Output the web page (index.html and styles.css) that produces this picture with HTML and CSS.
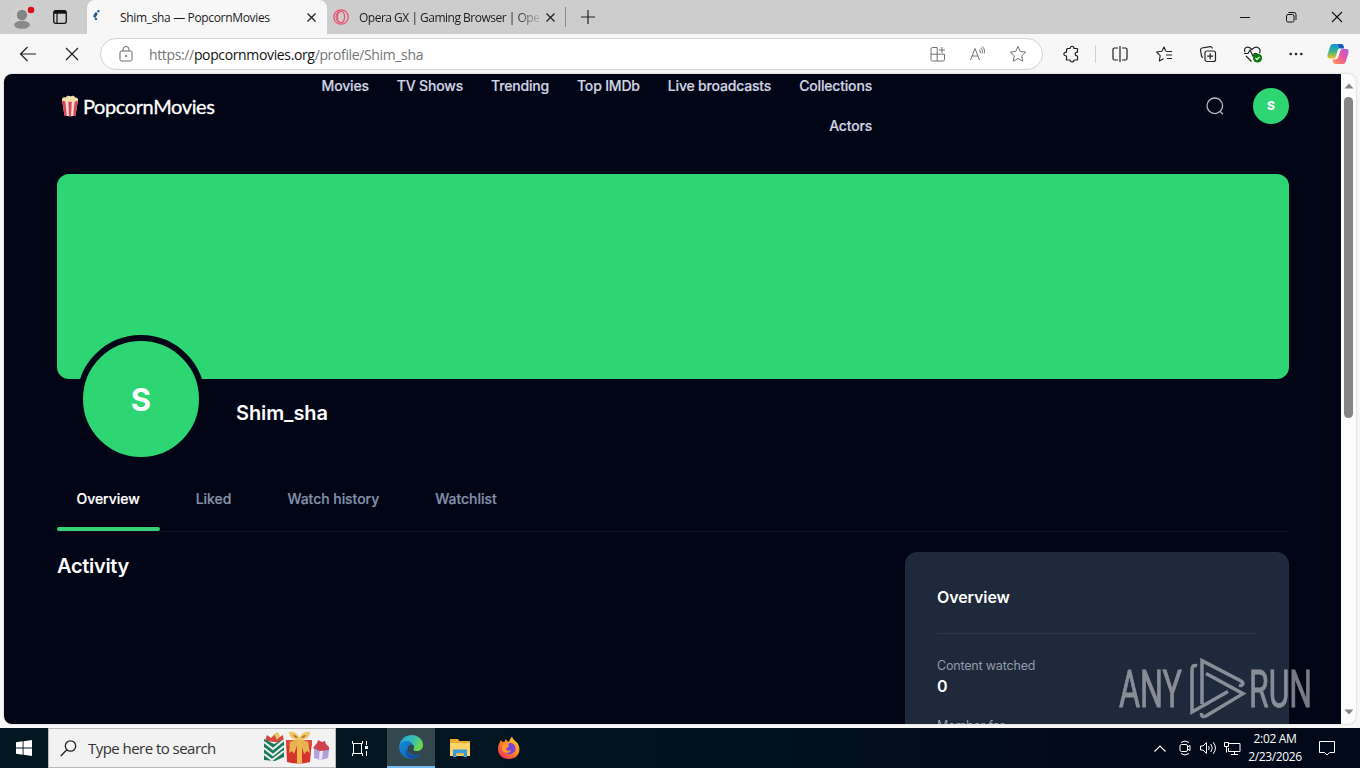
FILE: index.html
```html
<!DOCTYPE html>
<html lang="en">
<head>
    <meta charset="UTF-8">
    <meta name="viewport" content="width=device-width, initial-scale=1.0">
    <title>Shim_sha — PopcornMovies</title>
    <link rel="stylesheet" href="styles.css">
</head>
<body>
    <div class="tabbar">
        <div class="tab-tools">
            <svg class="profile-icon" width="24" height="26" viewBox="0 0 24 26">
                <circle cx="11" cy="14" r="11" fill="#d3d1cf"/>
                <circle cx="11" cy="11" r="5.2" fill="#858585"/>
                <ellipse cx="11" cy="20.8" rx="8" ry="4" fill="#8d8b89"/>
                <circle cx="20" cy="6" r="3.3" fill="#d9101c"/>
            </svg>
            <svg class="panel-icon" width="14" height="14" viewBox="0 0 14 14" fill="none" stroke="#111">
                <rect x=".7" y=".7" width="12.6" height="12.6" rx="2" stroke-width="1.3"/>
                <path d="M1 2.3h12" stroke-width="2.8"/>
                <path d="M4 3v10" stroke-width="1.2"/>
            </svg>
        </div>
        <div class="tab tab-active">
            <svg class="loading-icon" width="10" height="14" viewBox="0 0 10 14" fill="none" stroke="#1f5a92" stroke-linecap="round">
                <path d="M6.3 1.3l.2-.2" stroke-width="2.2"/>
                <path d="M4 3.8L2.8 6.2" stroke-width="3"/>
                <path d="M3.8 8.8l.3.2" stroke-width="2.2"/>
            </svg>
            <span class="tab-title">Shim_sha — PopcornMovies</span>
            <svg class="close-icon" width="9" height="9" viewBox="0 0 9 9" stroke="#222" stroke-width="1.3"><path d="M.5.5l8 8M8.5.5l-8 8"/></svg>
        </div>
        <div class="tab tab-back">
            <svg class="opera-icon" width="16" height="16" viewBox="0 0 16 16" fill="none" stroke="#e8516f">
                <circle cx="8" cy="8" r="7.2" stroke-width="1.3"/>
                <ellipse cx="8" cy="8" rx="3.6" ry="5.7" stroke-width="1.3"/>
                <path d="M6 2.5C2 4 2 12 6 13.5" stroke-width="1"/>
            </svg>
            <span class="tab-title faded">Opera GX | Gaming Browser | Ope</span>
            <svg class="close-icon" width="9" height="9" viewBox="0 0 9 9" stroke="#222" stroke-width="1.3"><path d="M.5.5l8 8M8.5.5l-8 8"/></svg>
        </div>
        <svg class="plus-icon" width="14" height="14" viewBox="0 0 14 14" stroke="#222" stroke-width="1.2"><path d="M7 0v14M0 7h14"/></svg>
        <div class="window-buttons">
            <svg width="12" height="12" viewBox="0 0 12 12" stroke="#111"><path d="M1 6.5h10"/></svg>
            <svg width="12" height="12" viewBox="0 0 12 12" fill="none" stroke="#111"><rect x="1.5" y="3.5" width="7.5" height="7.5" rx="1.5"/><path d="M3.5 1.5h5.5a2 2 0 0 1 2 2V9"/></svg>
            <svg width="12" height="12" viewBox="0 0 12 12" stroke="#111" stroke-width="1.1"><path d="M1 1l10 10M11 1L1 11"/></svg>
        </div>
    </div>

    <div class="toolbar">
        <svg class="back-icon" width="18" height="16" viewBox="0 0 18 16" fill="none" stroke="#222" stroke-width="1.2"><path d="M17 8H2M8.5 1L1.5 8l7 7"/></svg>
        <svg class="stop-icon" width="14" height="14" viewBox="0 0 14 14" stroke="#222" stroke-width="1.2"><path d="M1 1l12 12M13 1L1 13"/></svg>
        <div class="address">
            <svg class="lock-icon" width="14" height="16" viewBox="0 0 14 16" fill="none" stroke="#666"><rect x="1" y="5" width="12" height="10" rx="1.5"/><path d="M4 5V3.5a3 3 0 0 1 6 0V5"/><circle cx="7" cy="10" r=".6" fill="#666"/></svg>
            <span class="url">https://<b>popcornmovies.org</b>/profile/Shim_sha</span>
            <div class="address-icons">
                <svg width="18" height="18" viewBox="0 0 18 18" fill="none" stroke="#707070"><path d="M8 2.5H3.5a1.500 1.500 0 0 0-1.5 1.5V14.5A1.500 1.500 0 0 0 3.5 16H14a1.500 1.500 0 0 0 1.5-1.5V9.2H2M8.2 2.5V16M13 2v6M10 5h6"/></svg>
                <svg width="18" height="18" viewBox="0 0 18 18" fill="none" stroke="#707070"><path d="M1.5 15L6 3.5 10.5 15M3.2 11h5.7M10 4.5c1.2.8 1.500 2 1.300 3.500M11.5 2.8c1.8 1.400 2.300 3.300 1.800 5.500M13 1.3c2.300 1.800 3 4.200 2.300 7"/></svg>
                <svg width="18" height="18" viewBox="0 0 18 18" fill="none" stroke="#707070" stroke-linejoin="round"><path d="M9 1.5l2.3 5 5.4.6-4 3.7 1.1 5.4L9 13.5l-4.8 2.7 1.1-5.4-4-3.7 5.4-.6z"/></svg>
            </div>
        </div>
        <div class="toolbar-icons">
            <svg class="puzzle-icon" width="18" height="18" viewBox="0 0 18 18" fill="none" stroke="#222" stroke-width="1.2" stroke-linejoin="round"><path d="M5.5 3.5H8c0-3 4-3 4 0h3.5v3.7c-3 0-3 3.8 0 3.8v4H12c0 2.5-4 2.5-4 0H4.5v-4c-3.500 0-3.500-3.800 0-3.800V4.5z"/></svg>
            <svg class="split-icon" width="18" height="18" viewBox="0 0 18 18" fill="none" stroke="#222" stroke-width="1.2"><path d="M7 3H3.5A1.500 1.500 0 0 0 2 4.500v9A1.500 1.500 0 0 0 3.500 15H7M11 3h3.500A1.500 1.500 0 0 1 16 4.500v9a1.500 1.500 0 0 1-1.500 1.500H11M9 1v16"/></svg>
            <svg class="favorites-icon" width="18" height="18" viewBox="0 0 18 18" fill="none" stroke="#222" stroke-width="1.1" stroke-linejoin="round"><path d="M10.8 6.2L9 2 6.8 6.2l-5.3.8 3.7 3.6-.9 5.4 4.2-2.3M11.3 6.5H17M11 10h6M12 13.5h5"/></svg>
            <svg class="collections-icon" width="18" height="18" viewBox="0 0 18 18" fill="none" stroke="#222" stroke-width="1.2"><path d="M4 12.5A2 2 0 0 1 2.5 11L1.5 5A2 2 0 0 1 3 3l8-1.3A2 2 0 0 1 13.3 3.5"/><rect x="6" y="6" width="10.5" height="10.5" rx="2"/><path d="M11.2 8.2v6M8.2 11.2h6"/></svg>
            <svg class="health-icon" width="20" height="18" viewBox="0 0 20 18" fill="none" stroke="#222" stroke-width="1.2"><path d="M2 7C0 3 5 0 9 4.500 13 0 19 3 16.500 8M1 8.500h4L7 5l3 6 1.500-2.500H14M3 11l5.500 5.500"/><circle cx="14.5" cy="13" r="4.6" fill="#0f7b0f" stroke="none"/><path d="M12.5 13l1.5 1.5 2.6-2.7" stroke="#fff"/></svg>
            <svg class="more-icon" width="14" height="4" viewBox="0 0 14 4" fill="#222"><circle cx="1.7" cy="2" r="1.3"/><circle cx="7" cy="2" r="1.3"/><circle cx="12.3" cy="2" r="1.3"/></svg>
            <svg class="copilot-icon" width="22" height="22" viewBox="0 0 22 22">
                <defs>
                    <linearGradient id="cpA" x1="0" y1="0" x2="0" y2="1"><stop offset="0" stop-color="#1790e0"/><stop offset=".5" stop-color="#36b48a"/><stop offset="1" stop-color="#f5c21c"/></linearGradient>
                    <linearGradient id="cpB" x1="1" y1="0" x2="0" y2="1"><stop offset="0" stop-color="#a95be8"/><stop offset=".5" stop-color="#ee5c94"/><stop offset="1" stop-color="#ff9a4a"/></linearGradient>
                </defs>
                <path d="M6 1h8c2 0 2.500 1.500 3 4h-3c-2 0-3 1-3.500 3L9 13c-.6 2-1.500 2.500-3 2.500H3C.5 15.500 0 13.500.6 11.500L3 4c.6-2 1.500-3 3-3z" fill="url(#cpA)"/>
                <path d="M11 1h3c2 0 2.500 1.500 3 4.500h-3c-1.300 0-2-.5-2.300-2z" fill="#1855c0"/>
                <path d="M16 21H9c-2.200 0-3-1.500-3.500-4.500H8c2 0 3-1 3.500-3L13 8.500C13.600 6.500 14.500 6 16 6h3c2.500 0 3 2 2.400 4L19 18c-.6 2-1.500 3-3 3z" fill="url(#cpB)"/>
            </svg>
        </div>
    </div>

    <div class="view">
        <main class="page">
            <header class="header">
                <a class="logo">
                    <svg width="18" height="22" viewBox="0 0 18 22">
                        <path d="M1 5h16l-2.500 15.500q-5.500 1.500-11 0z" fill="#f6dcd8"/>
                        <path d="M1 5h3.200l1.600 16-2.300-.5zM7.200 5h3.600l-.7 16.400H8zM13.800 5H17l-2.500 15.500-2.300.5z" fill="#dc4455"/>
                        <path d="M1 5.500c-.5-3 2-4 3.500-3C6 .2 8.500.3 9.500 1.500c2-1.300 4-.5 4.500 1 2.500-.3 3.500 1.500 3 3.300-3 1.400-13 1.400-16-.3z" fill="#f2dfa8"/>
                    </svg>
                    <span>PopcornMovies</span>
                </a>
                <nav class="nav">
                    <a>Movies</a>
                    <a>TV Shows</a>
                    <a>Trending</a>
                    <a>Top IMDb</a>
                    <a>Live broadcasts</a>
                    <a>Collections</a>
                    <a>Actors</a>
                </nav>
                <div class="header-right">
                    <svg width="20" height="20" viewBox="0 0 20 20" fill="none" stroke="#b3b6c4" stroke-width="1.3"><circle cx="9.8" cy="9.8" r="7.8"/><path d="M15 15.3l3 3"/></svg>
                    <div class="user">S</div>
                </div>
            </header>

            <div class="banner"></div>
            <div class="profile">
                <div class="avatar">S</div>
                <h1>Shim_sha</h1>
            </div>
            <div class="tabs">
                <a class="active">Overview</a>
                <a>Liked</a>
                <a>Watch history</a>
                <a>Watchlist</a>
            </div>
            <div class="content">
                <h2>Activity</h2>
                <aside class="card">
                    <h3>Overview</h3>
                    <div class="label">Content watched</div>
                    <div class="value">0</div>
                    <div class="label">Member for</div>
                </aside>
            </div>
        </main>
        <div class="scrollbar">
            <svg width="10" height="6" viewBox="0 0 10 6"><path d="M5 .5l4.500 5h-9z" fill="#858585"/></svg>
            <div class="thumb"></div>
            <svg width="10" height="6" viewBox="0 0 10 6"><path d="M5 5.500l4.500-5h-9z" fill="#858585"/></svg>
        </div>
    </div>

    <div class="taskbar">
        <div class="start">
            <svg width="16" height="16" viewBox="0 0 16 16" fill="#fff"><path d="M0 2.200L6.600 1.300v6.200H0zM7.500 1.200L16 0v7.500H7.500zM0 8.400h6.600v6.300L0 13.800zM7.500 8.400H16V16l-8.500-1.200z"/></svg>
        </div>
        <div class="search">
            <svg width="17" height="17" viewBox="0 0 17 17" fill="none" stroke="#222" stroke-width="1.3"><circle cx="10.5" cy="6" r="5.2"/><path d="M6.800 9.800L.8 16"/></svg>
            <span>Type here to search</span>
            <svg class="gifts" width="68" height="34" viewBox="0 0 68 34">
                <path d="M2 10l2-6 4 3 4-4 3 4 5-3 1 8z" fill="#d6453d"/>
                <path d="M11 3l4-2 2 4-3 4z" fill="#e6c85a"/>
                <path d="M1 8l10 5 10-5v18l-9 4-11-1z" fill="#1c7a5c"/>
                <path d="M1 11l9 7 11-9M1 17l9 7 11-9M1 23l8 6 12-9" stroke="#eef3ea" stroke-width="2" fill="none"/>
                <path d="M23 9h26l-2 22q-11 3-23 0z" fill="#d4342c"/>
                <path d="M23 9h26v6H23z" fill="#e14a3a"/>
                <path d="M34 9h5v23h-5z" fill="#efb74e"/>
                <path d="M34 8l-7 3-1 11 3-2 2 3 5-14zM38 8l7 3 2 11-3-2-3 3-4-14z" fill="#e9b252"/>
                <path d="M26 1c5-1 9 2 10.500 6C38 3 42 0 47 1c0 5-4 8-10.500 8S26 6 26 1z" fill="#f0c565"/>
                <path d="M30 4c2 0 4 1 5 3-3 0-4-1-5-3zM43 4c-2 0-4 1-5 3 3 0 4-1 5-3z" fill="#a5752c"/>
                <path d="M51 17l15 2-1 8-7 2-7-2z" fill="#b1a2dc"/>
                <path d="M57 17l3 1-1 11-3-1z" fill="#f0e7f4"/>
                <path d="M50 17l4-5 1-3 4 2 3-1 1 3 3 3v3l-9 1z" fill="#cf4250"/>
            </svg>
        </div>
        <div class="task task-view">
            <svg width="18" height="17" viewBox="0 0 18 17" fill="none" stroke="#fff"><path d="M1.500 1v2.500h10V1M1.500 16v-2.500h10V16M2.500 3.500v10M10.500 3.500v10M15.500 1v4M15.500 11v5"/><path d="M14 6h3v3h-3z" fill="#fff" stroke="none"/></svg>
        </div>
        <div class="task edge">
            <svg width="24" height="24" viewBox="0 0 24 24">
                <defs>
                    <linearGradient id="edgeTop" x1="0" y1="0" x2="1" y2=".4"><stop offset="0" stop-color="#2a9fe0"/><stop offset=".6" stop-color="#35bfb5"/><stop offset="1" stop-color="#6ad84c"/></linearGradient>
                    <linearGradient id="edgeLow" x1="0" y1="0" x2="1" y2="1"><stop offset="0" stop-color="#1389dc"/><stop offset="1" stop-color="#125aa8"/></linearGradient>
                </defs>
                <path d="M.5 10C2 3.500 7 0 12.500 0 19 0 24 4.500 24 10c0 4-3 6-6.500 6-3 0-3.500-1.200-3-2 2-3-1-6-5-6C5 8 1.500 11 .5 13z" fill="url(#edgeTop)"/>
                <path d="M.3 10.500C1.500 7 5 5.500 8.500 6 12 6.400 14 8.500 14 10.500c-3-2-5.500.5-5.500 3.500 0 5 6.500 7.500 13 5C19 22.500 16 24 12 24 5 24-.8 18 .3 10.500z" fill="url(#edgeLow)"/>
                <path d="M8.500 14c-1 5 5 8.500 13 5-2 2.500-5 4.500-8.500 4.800C6 22 5 16 8.500 14z" fill="#1650a0"/>
            </svg>
        </div>
        <div class="task">
            <svg width="22" height="20" viewBox="0 0 22 20"><path d="M1 1h8l1.500 2H21v15H1z" fill="#f0ad2c"/><path d="M1 5h20v13H1z" fill="#fbd56a"/><path d="M4 11.500h14V19h-3.500v-4h-7v4H4z" fill="#3a9ade"/><path d="M7 15h8v2H7z" fill="#e7b54a"/></svg>
        </div>
        <div class="task">
            <svg width="24" height="24" viewBox="0 0 24 24">
                <defs><linearGradient id="fox" x1="1" y1="0" x2=".2" y2="1"><stop offset="0" stop-color="#ffe22e"/><stop offset=".5" stop-color="#ff8a26"/><stop offset="1" stop-color="#f0305a"/></linearGradient></defs>
                <path d="M4 4l1.500 2L8 5.500 8.500 3l3 3C13 4 13.500 2 15 .5c1 4 4 4 6 7.500 4 8-1 15-9 15C4.500 23 1 18 1 13c0-4 1.500-6.500 3-9z" fill="url(#fox)"/>
                <path d="M12 7c4-.5 6.500 2 6.500 5.500S16 18 12 18s-6.500-3-6-6c1.500 1 3 0 5-1z" fill="#7a45d8"/>
                <path d="M5.500 9c3-1 4.500 0 6.500 1-1 2-3 1.500-3 3 1 2.500 4 2 5 1-1 4-7 4-9 0z" fill="#ff9a2a"/>
            </svg>
        </div>
        <div class="tray">
            <svg width="12" height="7" viewBox="0 0 12 7" fill="none" stroke="#fff" stroke-width="1.2"><path d="M.5 6.500L6 1l5.500 5.500"/></svg>
            <svg class="meet-icon" width="12" height="16" viewBox="0 0 12 16" fill="none" stroke="#fff"><path d="M2 2.500q4-3 8 0M2 13.500q4 3 8 0M8.500 7l2.500-1.500v5L8.500 9"/><rect x="1" y="4.5" width="7.5" height="7" rx="1.5"/></svg>
            <svg class="sound-icon" width="17" height="14" viewBox="0 0 17 14" fill="none" stroke="#fff"><path d="M.5 5h2.500L6.500 1.500v11L3 9H.5zM8.500 5q1.500 2 0 4M10.800 3q3 4 0 8M13.200 1.200q4.500 5.800 0 11.600"/></svg>
            <svg class="network-icon" width="17" height="15" viewBox="0 0 17 15" fill="none" stroke="#fff"><path d="M5 2.500h11v8H4.500V7M10.500 10.500v3M7 13.500h7M.5 1.500h4v4h-4zM2.500 5.500v6"/></svg>
            <div class="clock">
                <div class="time">2:02 AM</div>
                <div class="date">2/23/2026</div>
            </div>
            <svg class="notice-icon" width="16" height="16" viewBox="0 0 16 16" fill="none" stroke="#fff"><path d="M.5 1.500h15v11h-5L8 15l-2.500-2.500h-5z"/></svg>
        </div>
    </div>

    <svg class="watermark" width="200" height="66" viewBox="0 0 200 66">
        <g class="watermark-text">
            <text x="3" y="51" textLength="63" lengthAdjust="spacingAndGlyphs">ANY</text>
            <text x="133" y="51" textLength="63" lengthAdjust="spacingAndGlyphs">RUN</text>
        </g>
        <path d="M81 9.700C77 8.500 76 11 76 14v42L112 35.500M86 48V4.700L125 25c3.500 2.500 1.500 5.500-2 4.200M90 17.500L127 37.700 90 60c-3 1.500-5 0-4.500-3" fill="none"/>
    </svg>
</body>
</html>
```
FILE: styles.css
```css
* {
    box-sizing: border-box;
}
body {
    margin: 0;
    width: 1360px;
    height: 768px;
    overflow: hidden;
    background: #f7f7f7;
    font-family: 'Open Sans', 'Noto Sans', sans-serif;
    position: relative;
}
svg {
    display: block;
    flex: none;
}
h1, h2, h3 {
    margin: 0;
    font-weight: 600;
}

/* browser tabs */
.tabbar {
    display: flex;
    align-items: center;
    height: 34px;
    background: #cdcdcd;
}
.tab-tools {
    width: 87px;
    height: 34px;
    display: flex;
    align-items: center;
    padding-left: 11px;
}
.panel-icon {
    margin-left: 18px;
}
.tab {
    display: flex;
    align-items: center;
    height: 34px;
    font-size: 12px;
    color: #1b1b1b;
}
.tab-active {
    width: 240px;
    padding-left: 5px;
    background: #f7f7f7;
    border-radius: 8px 8px 0 0;
}
.tab-title {
    flex: none;
    white-space: nowrap;
}
.tab-active .tab-title {
    width: 170px;
    margin: 0 17px 0 18px;
    letter-spacing: -0.34px;
}
.tab-back {
    width: 239px;
    padding-left: 6px;
    border-right: 1px solid #8b8b8b;
    height: 20px;
}
.faded {
    width: 180px;
    margin: 0 7px 0 10px;
    letter-spacing: -0.5px;
    -webkit-mask-image: linear-gradient(to right, #000 156px, transparent 184px);
    mask-image: linear-gradient(to right, #000 156px, transparent 184px);
}
.plus-icon {
    margin-left: 15px;
}
.window-buttons {
    display: flex;
    gap: 34px;
    margin-left: auto;
    padding-right: 17px;
}

/* address bar */
.toolbar {
    display: flex;
    align-items: center;
    height: 40px;
    padding-left: 19px;
}
.stop-icon {
    margin-left: 28px;
}
.address {
    display: flex;
    align-items: center;
    width: 943px;
    height: 32px;
    margin-left: 21px;
    padding: 0 15px 0 18px;
    background: #fff;
    border: 1px solid #d2d2d2;
    border-radius: 16px;
}
.url {
    margin-left: 16px;
    font-size: 14px;
    letter-spacing: -0.36px;
    color: #757575;
}
.url b {
    font-weight: 400;
    color: #111;
}
.address-icons {
    display: flex;
    gap: 22px;
    margin-left: auto;
}
.toolbar-icons {
    display: flex;
    align-items: center;
    flex: 1;
    padding-left: 19px;
}
.split-icon {
    box-sizing: content-box;
    margin-left: 15px;
    padding-left: 15px;
    border-left: 1px solid #d0d0d0;
}
.favorites-icon, .collections-icon, .health-icon {
    margin-left: 26px;
}
.more-icon {
    margin-left: 26px;
}
.copilot-icon {
    margin-left: 24px;
}

/* page */
.view {
    display: flex;
    height: 650px;
    margin: 0 4px;
    border-radius: 8px;
    overflow: hidden;
    background: #fcfcfc;
    box-shadow: 0 0 2px rgba(0, 0, 0, 0.25);
}
.page {
    width: 1337px;
    padding: 0 52px 0 53px;
    background: #020516;
    color: #fff;
    font-family: Inter, sans-serif;
    overflow: hidden;
}
.header {
    display: flex;
    align-items: center;
    height: 64px;
}
.logo {
    display: flex;
    align-items: center;
    gap: 4px;
    width: 240px;
    padding-left: 4px;
    font-family: Lato, sans-serif;
    font-size: 20px;
    letter-spacing: -0.4px;
    -webkit-text-stroke: 0.3px #fff;
}
.nav {
    display: flex;
    flex-wrap: wrap;
    justify-content: flex-end;
    column-gap: 28px;
    width: 575px;
    flex: none;
    font-size: 14px;
    font-weight: 500;
    line-height: 40px;
    letter-spacing: -0.18px;
    color: #d0d4e2;
    -webkit-text-stroke: 0.2px #d0d4e2;
}
.header-right {
    display: flex;
    align-items: center;
    gap: 28px;
    margin-left: auto;
}
.user {
    width: 36px;
    height: 36px;
    border-radius: 50%;
    background: #2ed573;
    font-size: 12px;
    font-weight: 800;
    line-height: 36px;
    text-align: center;
}
.banner {
    height: 205px;
    margin-top: 36px;
    border-radius: 12px;
    background: #2ed573;
}
.profile {
    display: flex;
    height: 88px;
    padding-left: 20px;
}
.avatar {
    width: 128px;
    height: 128px;
    margin-top: -44px;
    border: 6px solid #020516;
    border-radius: 50%;
    background: #2ed573;
    font-size: 31px;
    font-weight: 700;
    line-height: 118px;
    text-align: center;
}
.profile h1 {
    margin: 22px 0 0 31px;
    font-size: 20px;
    line-height: 24px;
    letter-spacing: -0.1px;
}
.tabs {
    display: flex;
    gap: 16px;
    height: 65px;
    border-bottom: 1px solid #11141f;
    font-size: 14px;
    font-weight: 500;
    line-height: 64px;
    letter-spacing: -0.04px;
    color: #8592ab;
    -webkit-text-stroke: 0.2px;
}
.tabs a {
    padding: 0 20px;
}
.tabs .active {
    position: relative;
    padding-left: 19.5px;
    color: #fff;
}
.tabs .active::after {
    content: '';
    position: absolute;
    left: 0;
    right: 0;
    bottom: 0;
    height: 4px;
    border-radius: 2px;
    background: #37cf78;
}
.content {
    display: flex;
    justify-content: space-between;
    padding-top: 20px;
}
.content h2 {
    margin-top: 2px;
    font-size: 20px;
    line-height: 24px;
    letter-spacing: -0.3px;
}
.card {
    width: 384px;
    height: 300px;
    padding: 32px 31px;
    border: 1px solid #202b3e;
    border-radius: 12px;
    background: #1e293b;
}
.card h3 {
    height: 49px;
    margin-bottom: 22px;
    border-bottom: 1px solid #2b3648;
    font-size: 16px;
    line-height: 25px;
    letter-spacing: -0.1px;
}
.label {
    font-size: 12.5px;
    line-height: 19px;
    letter-spacing: -0.18px;
    color: #939cad;
}
.value {
    margin-bottom: 19px;
    font-size: 16px;
    font-weight: 600;
    line-height: 22px;
}
.scrollbar {
    display: flex;
    flex-direction: column;
    align-items: center;
    width: 15px;
    padding: 9px 0;
}
.thumb {
    width: 9px;
    height: 321px;
    margin: 8px 0 auto;
    border-radius: 5px;
    background: #858585;
}

/* taskbar */
.taskbar {
    display: flex;
    height: 40px;
    margin-top: 4px;
    background: linear-gradient(to right, #021820, #021420 45%, #020919 85%);
    color: #fff;
}
.start {
    width: 48px;
    padding: 12px 16px;
}
.search {
    display: flex;
    align-items: center;
    width: 288px;
    padding-left: 11px;
    border: 1px solid #b9b9b9;
    background: #f2f2f2;
    font-size: 15px;
    color: #333;
}
.search span {
    width: 164px;
    margin-left: 11px;
    letter-spacing: -0.54px;
    white-space: nowrap;
}
.gifts {
    margin-left: 11px;
}
.task {
    display: flex;
    align-items: center;
    justify-content: center;
    width: 49px;
}
.task-view {
    width: 51px;
    padding-right: 4px;
}
.edge {
    width: 48px;
    background: #34474d;
    border-bottom: 2px solid #76b9ed;
}
.tray {
    display: flex;
    align-items: center;
    margin-left: auto;
    padding-right: 25px;
}
.meet-icon {
    margin-left: 13px;
}
.sound-icon {
    margin-left: 9px;
}
.network-icon {
    margin-left: 7px;
}
.clock {
    width: 66px;
    margin: 0 10px 0 1px;
    font-size: 12px;
    line-height: 18px;
    text-align: center;
    letter-spacing: -0.35px;
}
.notice-icon {
    margin-left: 1px;
}

.watermark {
    position: absolute;
    left: 1116px;
    top: 656px;
    opacity: 0.47;
}
.watermark-text {
    font-family: Roboto, sans-serif;
    font-size: 52px;
    fill: #fff;
    stroke: #fff;
    stroke-width: 0.8;
}
.watermark path {
    stroke: #fff;
    stroke-width: 3.5;
}
```
